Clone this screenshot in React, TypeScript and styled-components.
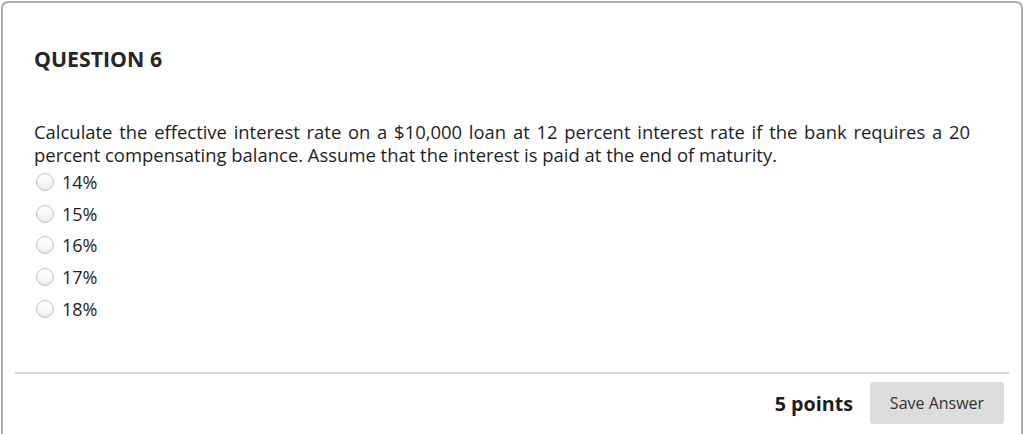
import styled, { createGlobalStyle } from "styled-components";

const GlobalStyle = createGlobalStyle`
  html, body {
    margin: 0;
    padding: 0;
    background: #fff;
  }
  body {
    font-family: "Open Sans", "Liberation Sans", sans-serif;
    color: #222;
    overflow: hidden;
  }
`;

const Card = styled.div`
  margin: 1px 1px 0 1px;
  height: 460px;
  border: 2px solid #ababab;
  border-radius: 7px;
  padding: 0 12px;
  box-sizing: border-box;
`;

const Content = styled.div`
  padding: 42px 39px 0 19px;
  height: 369px;
  box-sizing: border-box;
`;

const Heading = styled.h2`
  margin: 0;
  font-size: 21.3px;
  line-height: 28px;
  font-weight: 700;
  color: #262626;
`;

const Prompt = styled.p`
  margin: 47px 0 0 0;
  font-size: 18.45px;
  line-height: 23px;
  text-align: justify;
  color: #1e1e1e;
`;

const Options = styled.ul`
  list-style: none;
  margin: 0;
  padding: 0;
`;

const Option = styled.li`
  display: flex;
  align-items: center;
  height: 31.8px;
  font-size: 18px;
  color: #1e1e1e;
`;

const Radio = styled.span`
  width: 18px;
  height: 18px;
  margin: 0 8px 0 2px;
  border-radius: 50%;
  border: 1px solid #c4c4c4;
  background: linear-gradient(#fdfdfd, #f1f1f1);
  box-shadow: inset 0 -1px 1px rgba(0, 0, 0, 0.06);
  box-sizing: border-box;
  flex-shrink: 0;
`;

const Divider = styled.hr`
  margin: 0;
  border: none;
  border-top: 2px solid #d6d6d6;
`;

const Footer = styled.div`
  display: flex;
  justify-content: flex-end;
  align-items: center;
  gap: 17px;
  padding: 8px 5px 0 0;
`;

const Points = styled.span`
  font-size: 19.7px;
  font-weight: 700;
  color: #1c1c1c;
`;

const SaveButton = styled.button`
  width: 134px;
  height: 42px;
  border: none;
  border-radius: 3px;
  background: #dcdcdc;
  color: #333;
  font-family: "Open Sans", "Liberation Sans", sans-serif;
  font-size: 16px;
  cursor: pointer;
`;

const answers = ["14%", "15%", "16%", "17%", "18%"];

export default function App() {
  return (
    <>
      <GlobalStyle />
      <Card>
        <Content>
          <Heading>QUESTION 6</Heading>
          <Prompt>
            Calculate the effective interest rate on a $10,000 loan at 12 percent interest rate if the bank requires a 20
            percent compensating balance. Assume that the interest is paid at the end of maturity.
          </Prompt>
          <Options>
            {answers.map((a) => (
              <Option key={a}>
                <Radio />
                {a}
              </Option>
            ))}
          </Options>
        </Content>
        <Divider />
        <Footer>
          <Points>5 points</Points>
          <SaveButton>Save Answer</SaveButton>
        </Footer>
      </Card>
    </>
  );
}
